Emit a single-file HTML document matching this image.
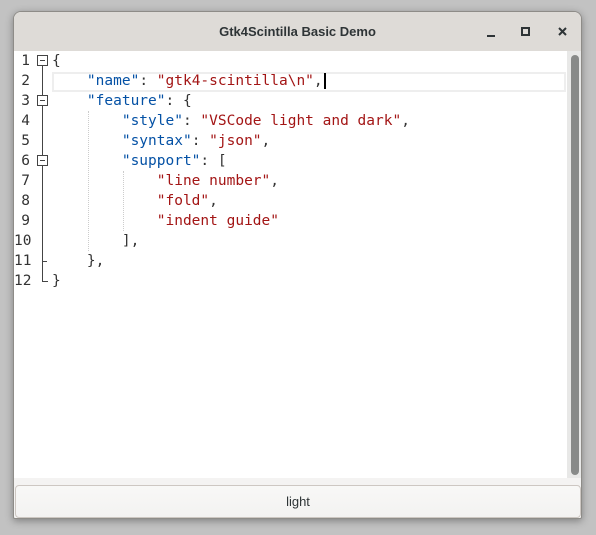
<!DOCTYPE html>
<html><head><style>
body{margin:0;width:596px;height:535px;background:#c2c2c2;position:relative;overflow:hidden;font-family:"Liberation Sans",sans-serif}
.win{position:absolute;left:13px;top:11px;width:569px;height:508px;background:#f4f3f2;border-radius:8px 8px 2px 2px;box-shadow:0 2px 8px rgba(0,0,0,.35);overflow:hidden;border:1px solid #8e8c88;box-sizing:border-box}
.title{position:absolute;left:0;top:0;width:100%;height:39px;background:#dedbd7;border-bottom:1px solid #cbc5bf;text-align:center;font-weight:bold;font-size:13px;line-height:39px;color:#2e3436}
.ed{position:absolute;left:0;top:39px;width:553px;height:427px;background:#fff}
.sb{position:absolute;left:553px;top:39px;width:15px;height:427px;background:#e8e8e7}
.thumb{position:absolute;left:4px;top:4px;width:8px;height:420px;border-radius:4px;background:#888a89}
.ln{position:absolute;left:0;width:16px;text-align:right;font:14.5px "DejaVu Sans Mono",monospace;color:#333}
.code{position:absolute;left:38px;font:14.5px "DejaVu Sans Mono",monospace;white-space:pre;color:#333;line-height:20px}
.k{color:#0451a5}.s{color:#a31515}
.fold{position:absolute;left:23px;width:11px;height:11px;border:1px solid #444;box-sizing:border-box;background:#fff}
.fold:after{content:"";position:absolute;left:2px;top:4px;width:5px;height:1px;background:#444}
.vl{position:absolute;left:28px;width:1px;background:#444}
.btn{position:absolute;left:1px;top:473px;width:566px;height:33px;border:1px solid #cdc7c2;border-radius:4px;box-sizing:border-box;background:linear-gradient(#f8f8f7,#f3f2f1);text-align:center;line-height:31px;font-size:13px;color:#2e3436}
.guide{position:absolute;width:0;border-left:1px dotted #ccc}
</style></head><body>
<div class="win">
<div class="title">Gtk4Scintilla Basic Demo</div>
<svg style="position:absolute;left:470px;top:14px" width="90" height="14">
<rect x="3" y="9" width="8" height="2" fill="#2e3436"/>
<rect x="38" y="2" width="7" height="7" fill="none" stroke="#2e3436" stroke-width="2"/>
<path d="M75 2l7 7M82 2l-7 7" stroke="#2e3436" stroke-width="2"/>
</svg>
<div class="ed">
<div style="position:absolute;left:38px;top:21px;width:514px;height:20px;border:2px solid #eee;box-sizing:border-box"></div>
<div class="guide" style="left:74px;top:60px;height:140px"></div>
<div class="guide" style="left:109px;top:120px;height:60px"></div>
<div class="ln" style="top:0;line-height:20px">1<br>2<br>3<br>4<br>5<br>6<br>7<br>8<br>9<br>10<br>11<br>12</div>
<div class="fold" style="top:4px"></div>
<div class="fold" style="top:44px"></div>
<div class="fold" style="top:104px"></div>
<div class="vl" style="top:15px;height:29px"></div>
<div class="vl" style="top:55px;height:49px"></div>
<div class="vl" style="top:115px;height:115px"></div>
<div style="position:absolute;left:28px;top:210px;width:5px;height:1px;background:#444"></div>
<div style="position:absolute;left:28px;top:230px;width:6px;height:1px;background:#444"></div>
<div class="code" style="top:0">{
    <span class="k">"name"</span>: <span class="s">"gtk4-scintilla\n"</span>,<span style="border-left:2px solid #000;margin-left:1px"></span>
    <span class="k">"feature"</span>: {
        <span class="k">"style"</span>: <span class="s">"VSCode light and dark"</span>,
        <span class="k">"syntax"</span>: <span class="s">"json"</span>,
        <span class="k">"support"</span>: [
            <span class="s">"line number"</span>,
            <span class="s">"fold"</span>,
            <span class="s">"indent guide"</span>
        ],
    },
}</div>
</div>
<div class="sb"><div class="thumb"></div></div>
<div class="btn">light</div>
</div>
</body></html>
